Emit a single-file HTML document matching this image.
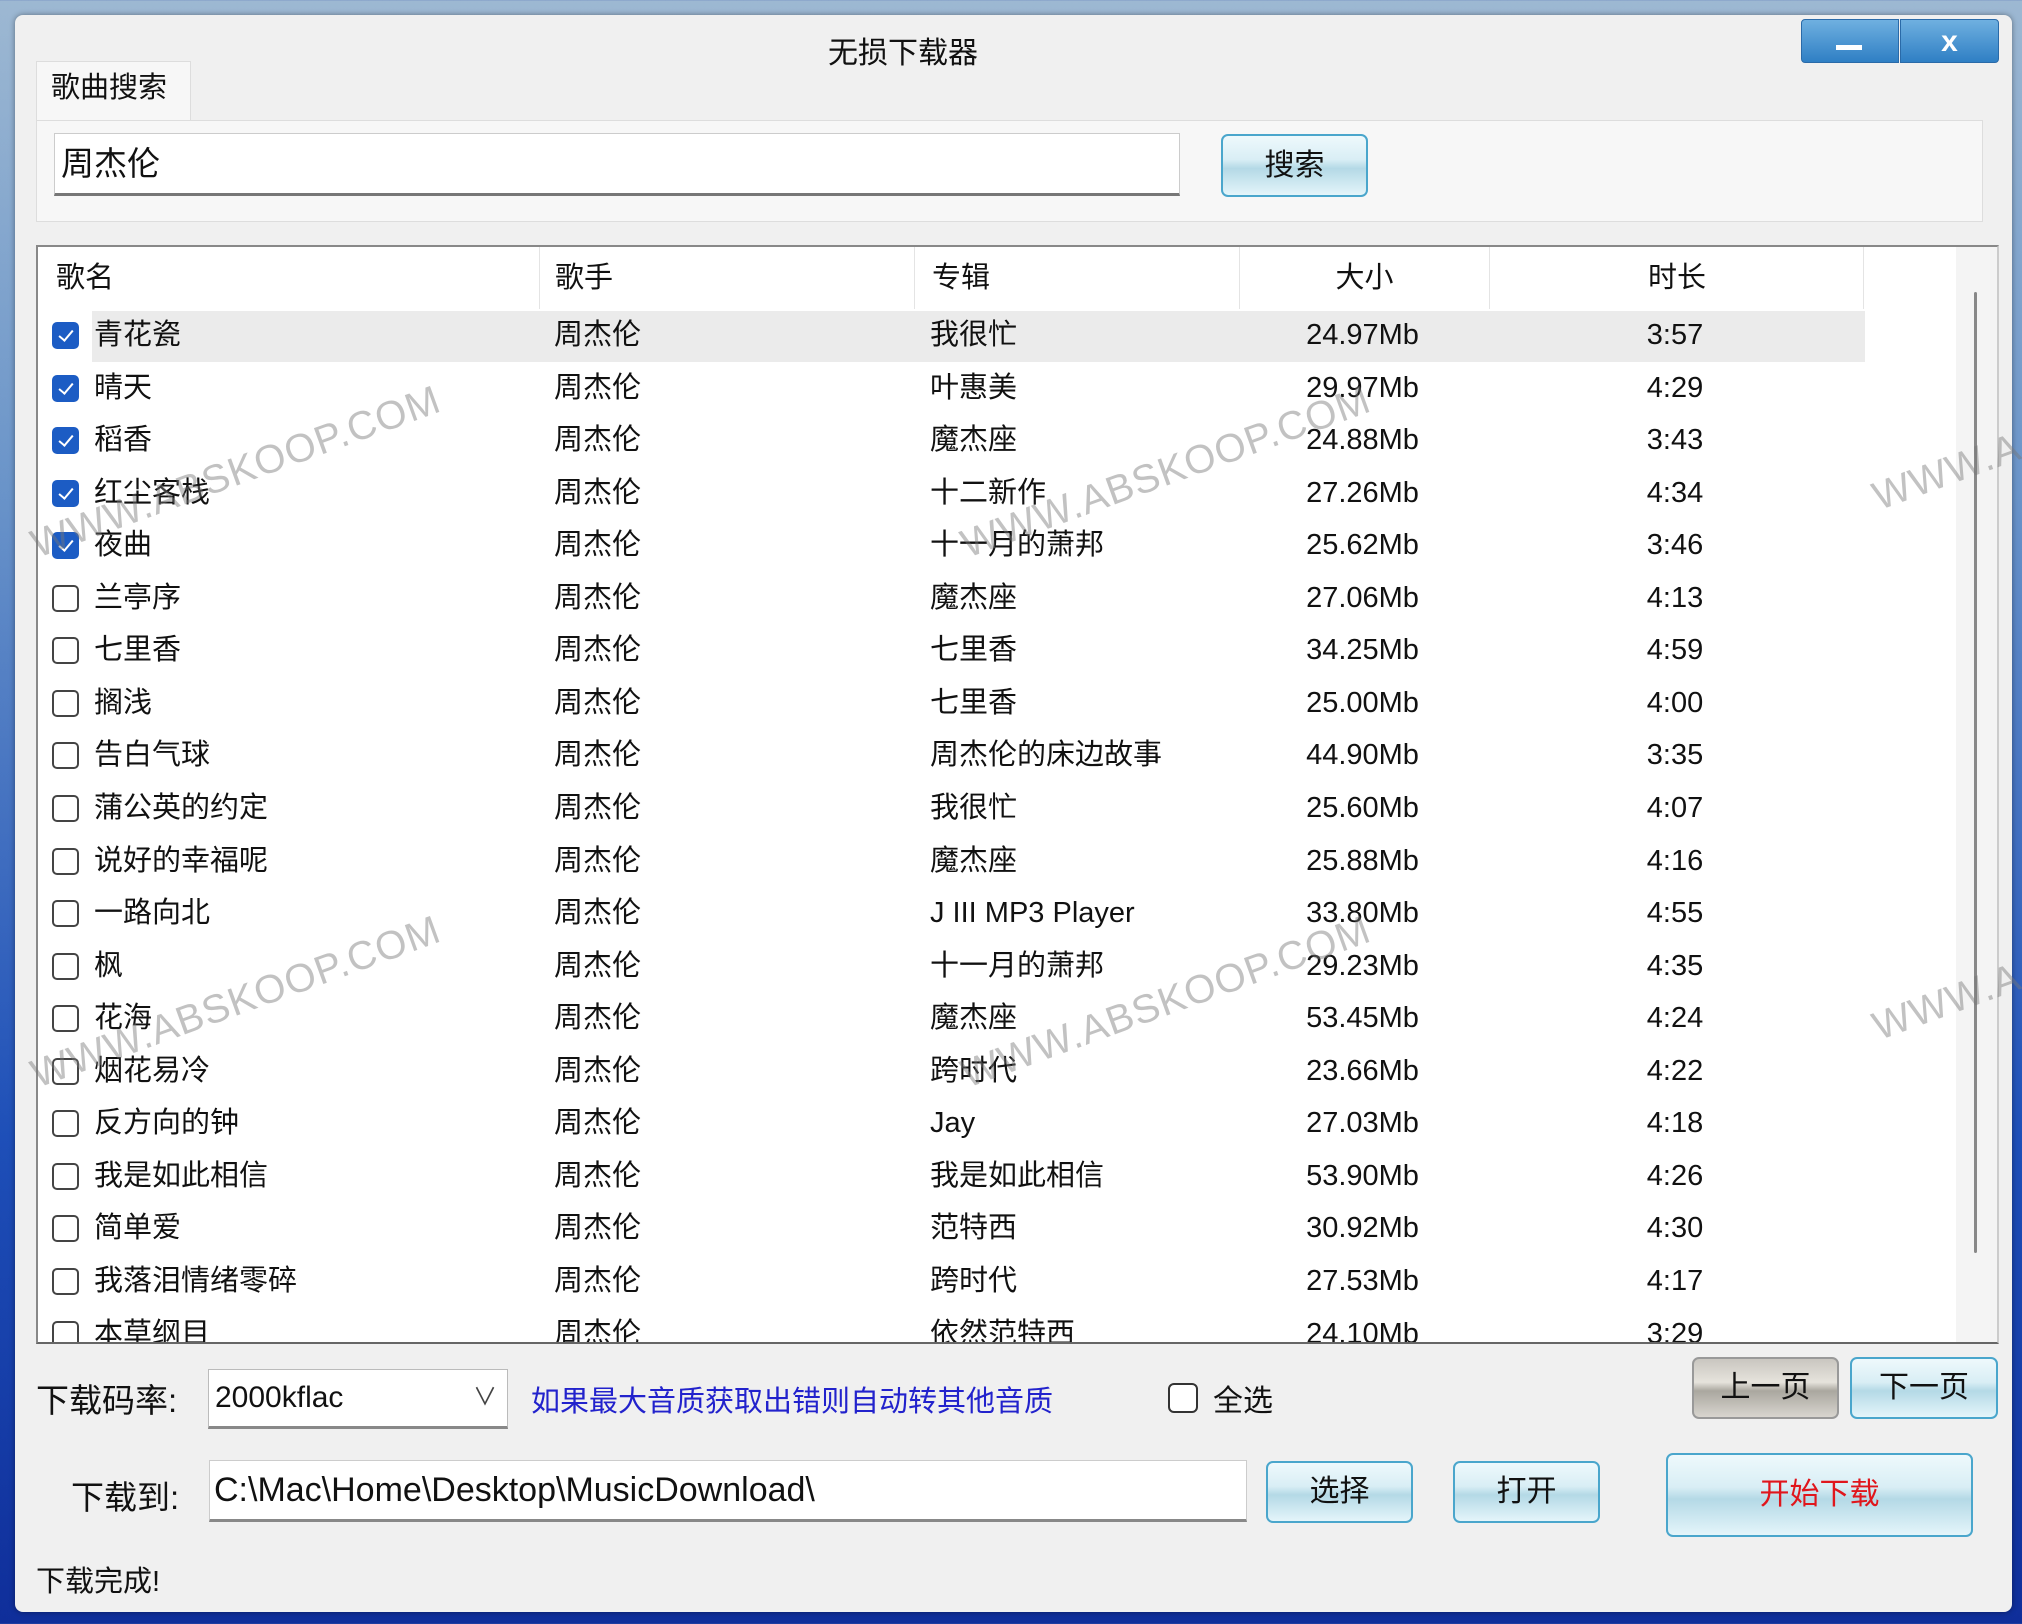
<!DOCTYPE html>
<html><head><meta charset="utf-8"><style>
*{box-sizing:border-box;margin:0;padding:0}
body{width:2022px;height:1624px;overflow:hidden;position:relative;background:linear-gradient(180deg,#9db8d2 0%,#6a94c9 30%,#1e4fb8 70%,#0f2e9a 100%);font-family:"Liberation Sans","Noto Sans CJK SC",sans-serif;color:#111}
.a{position:absolute}
#win{left:15px;top:15px;width:1997px;height:1597px;background:#f0f0f0;border-radius:8px;box-shadow:0 0 6px rgba(0,0,0,.4)}
.btn{position:absolute;border:2px solid #4aa6cc;border-radius:7px;background:linear-gradient(180deg,#eef9fc 0%,#d9eef5 40%,#b4d9e6 55%,#e4f5fa 100%);font-size:30px;text-align:center}
.cb{position:absolute;left:52px;top:13px;width:27px;height:27px;border-radius:5px;border:2px solid #444;background:#fff}
.cb.on{background:#1c5cc4;border-color:#1c5cc4}
.cb.on:after{content:"";position:absolute;left:8px;top:3px;width:6px;height:12px;border:solid #fff;border-width:0 2px 2px 0;transform:rotate(40deg)}
.r{position:absolute;left:0;width:1863px;height:52px;font-size:29px;line-height:52px}
.r span{position:absolute;top:0;white-space:nowrap}
.n{left:94px}.s{left:554px}.al{left:930px}.z{left:1300px;width:125px;text-align:center}.d{left:1620px;width:110px;text-align:center}
.wm{position:absolute;font-size:40px;color:rgba(120,120,120,.45);transform:rotate(-20deg);white-space:nowrap;letter-spacing:1px;font-family:"Liberation Sans",sans-serif}
</style></head><body>
<div id="win" class="a"></div>
<div class="a" style="left:0;top:28px;width:1806px;text-align:center;font-size:30px">无损下载器</div>
<div class="a" style="left:1801px;top:19px;width:98px;height:44px;background:linear-gradient(180deg,#6fb0e0,#2f7fc4);border:1px solid #2a6aa8;border-radius:4px 0 0 4px"></div>
<div class="a" style="left:1836px;top:45px;width:26px;height:5px;background:#fff"></div>
<div class="a" style="left:1900px;top:19px;width:99px;height:44px;background:linear-gradient(180deg,#6fb0e0,#2f7fc4);border:1px solid #2a6aa8;border-radius:0 4px 4px 0;color:#fff;font-size:30px;font-weight:bold;text-align:center;line-height:44px">x</div>
<div class="a" style="left:36px;top:61px;width:155px;height:62px;background:#f7f7f7;border:1px solid #ddd;border-bottom:none;font-size:29px;line-height:52px;padding-left:14px">歌曲搜索</div>
<div class="a" style="left:36px;top:120px;width:1947px;height:102px;background:#f7f7f7;border:1px solid #ddd"></div>
<div class="a" style="left:54px;top:133px;width:1126px;height:63px;background:#fff;border:1px solid #ccc;border-bottom:3px solid #777;font-size:33px;line-height:60px;padding-left:6px">周杰伦</div>
<div class="btn" style="left:1221px;top:134px;width:147px;height:63px;line-height:59px">搜索</div>
<div class="a" style="left:36px;top:245px;width:1963px;height:1099px;background:#fff;border:2px solid #888;border-right-color:#ccc;border-bottom-color:#666;overflow:hidden">
<div class="a" style="left:0;top:0;width:1827px;height:62px;font-size:29px;line-height:62px">
<span class="a" style="left:18px">歌名</span><span class="a" style="left:517px">歌手</span><span class="a" style="left:894px">专辑</span><span class="a" style="left:1264px;width:125px;text-align:center">大小</span><span class="a" style="left:1584px;width:110px;text-align:center">时长</span>
<div class="a" style="left:501px;top:0;width:1px;height:62px;background:#e4e4e4"></div>
<div class="a" style="left:876px;top:0;width:1px;height:62px;background:#e4e4e4"></div>
<div class="a" style="left:1201px;top:0;width:1px;height:62px;background:#e4e4e4"></div>
<div class="a" style="left:1451px;top:0;width:1px;height:62px;background:#e4e4e4"></div>
<div class="a" style="left:1825px;top:0;width:1px;height:62px;background:#e4e4e4"></div>
</div>
<div class="a" style="left:1918px;top:0;width:43px;height:1097px;background:#f4f4f4"></div>
<div class="a" style="left:1936px;top:45px;width:3px;height:961px;background:#888;border-radius:2px"></div>
<div class="a" style="left:54px;top:64px;width:1773px;height:51px;background:#ebebeb"></div>
<div class="a" style="left:-38px;top:-247px">
<div class="r" style="top:309px"><i class="cb on"></i><span class="n">青花瓷</span><span class="s">周杰伦</span><span class="al">我很忙</span><span class="z">24.97Mb</span><span class="d">3:57</span></div>
<div class="r" style="top:361.5px"><i class="cb on"></i><span class="n">晴天</span><span class="s">周杰伦</span><span class="al">叶惠美</span><span class="z">29.97Mb</span><span class="d">4:29</span></div>
<div class="r" style="top:414.1px"><i class="cb on"></i><span class="n">稻香</span><span class="s">周杰伦</span><span class="al">魔杰座</span><span class="z">24.88Mb</span><span class="d">3:43</span></div>
<div class="r" style="top:466.6px"><i class="cb on"></i><span class="n">红尘客栈</span><span class="s">周杰伦</span><span class="al">十二新作</span><span class="z">27.26Mb</span><span class="d">4:34</span></div>
<div class="r" style="top:519.2px"><i class="cb on"></i><span class="n">夜曲</span><span class="s">周杰伦</span><span class="al">十一月的萧邦</span><span class="z">25.62Mb</span><span class="d">3:46</span></div>
<div class="r" style="top:571.8px"><i class="cb"></i><span class="n">兰亭序</span><span class="s">周杰伦</span><span class="al">魔杰座</span><span class="z">27.06Mb</span><span class="d">4:13</span></div>
<div class="r" style="top:624.3px"><i class="cb"></i><span class="n">七里香</span><span class="s">周杰伦</span><span class="al">七里香</span><span class="z">34.25Mb</span><span class="d">4:59</span></div>
<div class="r" style="top:676.9px"><i class="cb"></i><span class="n">搁浅</span><span class="s">周杰伦</span><span class="al">七里香</span><span class="z">25.00Mb</span><span class="d">4:00</span></div>
<div class="r" style="top:729.4px"><i class="cb"></i><span class="n">告白气球</span><span class="s">周杰伦</span><span class="al">周杰伦的床边故事</span><span class="z">44.90Mb</span><span class="d">3:35</span></div>
<div class="r" style="top:782px"><i class="cb"></i><span class="n">蒲公英的约定</span><span class="s">周杰伦</span><span class="al">我很忙</span><span class="z">25.60Mb</span><span class="d">4:07</span></div>
<div class="r" style="top:834.5px"><i class="cb"></i><span class="n">说好的幸福呢</span><span class="s">周杰伦</span><span class="al">魔杰座</span><span class="z">25.88Mb</span><span class="d">4:16</span></div>
<div class="r" style="top:887.1px"><i class="cb"></i><span class="n">一路向北</span><span class="s">周杰伦</span><span class="al">J III MP3 Player</span><span class="z">33.80Mb</span><span class="d">4:55</span></div>
<div class="r" style="top:939.6px"><i class="cb"></i><span class="n">枫</span><span class="s">周杰伦</span><span class="al">十一月的萧邦</span><span class="z">29.23Mb</span><span class="d">4:35</span></div>
<div class="r" style="top:992.2px"><i class="cb"></i><span class="n">花海</span><span class="s">周杰伦</span><span class="al">魔杰座</span><span class="z">53.45Mb</span><span class="d">4:24</span></div>
<div class="r" style="top:1044.7px"><i class="cb"></i><span class="n">烟花易冷</span><span class="s">周杰伦</span><span class="al">跨时代</span><span class="z">23.66Mb</span><span class="d">4:22</span></div>
<div class="r" style="top:1097.3px"><i class="cb"></i><span class="n">反方向的钟</span><span class="s">周杰伦</span><span class="al">Jay</span><span class="z">27.03Mb</span><span class="d">4:18</span></div>
<div class="r" style="top:1149.8px"><i class="cb"></i><span class="n">我是如此相信</span><span class="s">周杰伦</span><span class="al">我是如此相信</span><span class="z">53.90Mb</span><span class="d">4:26</span></div>
<div class="r" style="top:1202.4px"><i class="cb"></i><span class="n">简单爱</span><span class="s">周杰伦</span><span class="al">范特西</span><span class="z">30.92Mb</span><span class="d">4:30</span></div>
<div class="r" style="top:1254.9px"><i class="cb"></i><span class="n">我落泪情绪零碎</span><span class="s">周杰伦</span><span class="al">跨时代</span><span class="z">27.53Mb</span><span class="d">4:17</span></div>
<div class="r" style="top:1307.5px"><i class="cb"></i><span class="n">本草纲目</span><span class="s">周杰伦</span><span class="al">依然范特西</span><span class="z">24.10Mb</span><span class="d">3:29</span></div>
</div>
</div>
<div class="a" style="left:36px;top:1374px;font-size:33px">下载码率:</div>
<div class="a" style="left:208px;top:1369px;width:300px;height:60px;background:#fff;border:1px solid #bbb;border-bottom:3px solid #888;font-size:30px;line-height:56px;padding-left:6px">2000kflac<span class="a" style="right:10px;top:0;font-size:24px;color:#444">∨</span></div>
<div class="a" style="left:531px;top:1378px;font-size:29px;color:#2222cc">如果最大音质获取出错则自动转其他音质</div>
<div class="a" style="left:1168px;top:1383px;width:30px;height:30px;border:2px solid #333;border-radius:6px;background:#fff"></div>
<div class="a" style="left:1213px;top:1376px;font-size:30px">全选</div>
<div class="btn" style="left:1692px;top:1357px;width:147px;height:62px;line-height:58px;border-color:#999;background:linear-gradient(180deg,#c9c6c0 0%,#e6e3dc 40%,#aaa79f 55%,#d8d5cf 100%)">上一页</div>
<div class="btn" style="left:1850px;top:1357px;width:148px;height:62px;line-height:58px">下一页</div>
<div class="a" style="left:71px;top:1471px;font-size:33px">下载到:</div>
<div class="a" style="left:209px;top:1460px;width:1038px;height:62px;background:#fff;border:1px solid #ccc;border-bottom:3px solid #888;font-size:34px;line-height:58px;padding-left:4px">C:\Mac\Home\Desktop\MusicDownload\</div>
<div class="btn" style="left:1266px;top:1461px;width:147px;height:62px;line-height:58px">选择</div>
<div class="btn" style="left:1453px;top:1461px;width:147px;height:62px;line-height:58px">打开</div>
<div class="btn" style="left:1666px;top:1453px;width:307px;height:84px;line-height:80px;color:#e0161c">开始下载</div>
<div class="a" style="left:36px;top:1558px;font-size:29px">下载完成!</div>
<div class="wm" style="left:20px;top:450px">WWW.ABSKOOP.COM</div>
<div class="wm" style="left:950px;top:450px">WWW.ABSKOOP.COM</div>
<div class="wm" style="left:1870px;top:450px">WWW.A</div>
<div class="wm" style="left:20px;top:980px">WWW.ABSKOOP.COM</div>
<div class="wm" style="left:950px;top:980px">WWW.ABSKOOP.COM</div>
<div class="wm" style="left:1870px;top:980px">WWW.A</div>
</body></html>
